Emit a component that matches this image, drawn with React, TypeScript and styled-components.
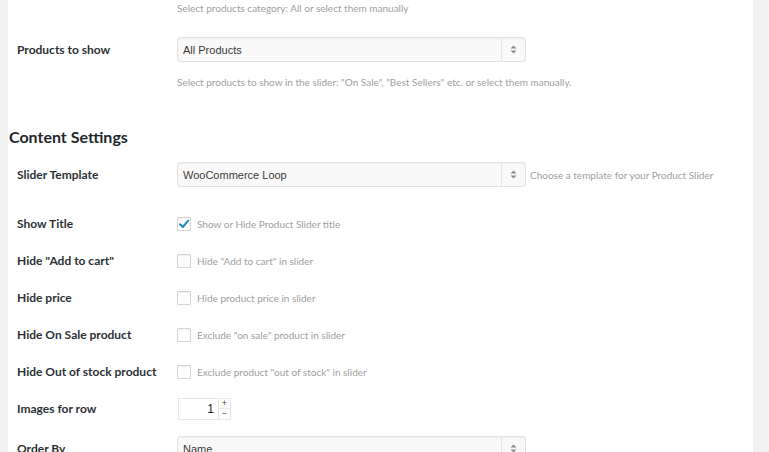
import React from "react";
import styled, { createGlobalStyle } from "styled-components";

const GlobalStyle = createGlobalStyle`
  html, body {
    margin: 0;
    padding: 0;
    background: #f1f1f1;
    overflow: hidden;
  }
`;

const Page = styled("div")`
  display: flex;
  height: 452px;
  padding-left: 8px;
`;

const Panel = styled("div")`
  width: 745px;
  background: #fff;
  display: flex;
  flex-direction: column;
`;

const FormTable = styled("div")`
  display: flex;
  flex-direction: column;
  padding-left: 9px;
`;

const Row = styled("div")<{ $h: number; $mt?: number }>`
  display: grid;
  grid-template-columns: 160px 1fr;
  align-items: center;
  height: ${(p) => p.$h}px;
  margin-top: ${(p) => p.$mt || 0}px;
`;

const Label = styled("div")`
  font-family: Lato, "Open Sans", sans-serif;
  font-weight: 700;
  font-size: 12px;
  color: #2c3136;
`;

const Field = styled("div")`
  display: flex;
  align-items: center;
  gap: 4px;
`;

const Desc = styled("div")<{ $mt?: number }>`
  font-family: Lato, "Open Sans", sans-serif;
  font-size: 10px;
  line-height: 14px;
  color: #a0a0a0;
  margin-top: ${(p) => p.$mt || 0}px;
`;

const SelectBox = styled("div")`
  width: 349px;
  height: 25px;
  box-sizing: border-box;
  border: 1px solid #e2e2e2;
  border-radius: 3px;
  background: #f9f9f9;
  box-shadow: inset 0 1px 2px rgba(0, 0, 0, 0.05);
  display: flex;
  align-items: stretch;
  font-family: "Liberation Sans", Arial, sans-serif;
  font-size: 11px;
  color: #3a3a3a;
`;

const SelectValue = styled("div")`
  flex: 1;
  display: flex;
  align-items: center;
  padding-left: 5px;
`;

const SelectArrow = styled("div")`
  width: 23px;
  border-left: 1px solid #e6e6e6;
  display: flex;
  align-items: center;
  justify-content: center;
`;

const Divider = styled("div")`
  height: 1px;
  background: #e5e5e5;
  margin: 22px 8px 0 8px;
`;

const Heading = styled("h2")`
  margin: 16px 0 0 1px;
  font-family: Lato, "Open Sans", sans-serif;
  font-weight: 700;
  font-size: 16px;
  line-height: 20px;
  color: #23282d;
`;

const CheckLabel = styled("label")`
  display: flex;
  align-items: center;
  gap: 6px;
`;

const Box = styled("span")`
  width: 14px;
  height: 14px;
  box-sizing: border-box;
  border: 1px solid #d4d4d4;
  border-radius: 1px;
  background: #fff;
  box-shadow: inset 0 1px 2px rgba(0, 0, 0, 0.06);
  display: flex;
  align-items: center;
  justify-content: center;
`;

const Spinner = styled("div")`
  display: flex;
  height: 22px;
  margin-left: 1px;
`;

const SpinInput = styled("div")`
  width: 40px;
  box-sizing: border-box;
  border: 1px solid #e8e8e8;
  border-right: none;
  display: flex;
  align-items: center;
  justify-content: flex-end;
  padding-right: 4px;
  font-family: "Liberation Sans", Arial, sans-serif;
  font-size: 12px;
  color: #222;
`;

const SpinButtons = styled("div")`
  width: 13px;
  display: flex;
  flex-direction: column;
  border: 1px solid #e8e8e8;
  box-sizing: border-box;
`;

const SpinBtn = styled("div")`
  flex: 1;
  display: flex;
  align-items: center;
  justify-content: center;
  font-family: "Liberation Sans", Arial, sans-serif;
  font-size: 9px;
  line-height: 1;
  color: #444;
  & + & {
    border-top: 1px solid #e8e8e8;
  }
`;

const Gutter = styled("div")`
  flex: 1;
  background: #f1f1f1;
`;

const Arrows = () => (
  <svg width="7" height="9" viewBox="0 0 7 9">
    <path d="M3.5 0.5 L6.5 3.5 H0.5 Z" fill="#8c8c8c" />
    <path d="M3.5 8.5 L6.5 5.5 H0.5 Z" fill="#8c8c8c" />
  </svg>
);

const Select = ({ value }: { value: string }) => (
  <SelectBox>
    <SelectValue>{value}</SelectValue>
    <SelectArrow>
      <Arrows />
    </SelectArrow>
  </SelectBox>
);

const Check = ({ checked, text }: { checked?: boolean; text: string }) => (
  <CheckLabel>
    <Box>
      {checked && (
        <svg width="12" height="12" viewBox="0 0 12 12">
          <path
            d="M2 6.2 L4.8 9 L10.2 2.6"
            fill="none"
            stroke="#1e8cbe"
            strokeWidth="2"
            strokeLinecap="round"
            strokeLinejoin="round"
          />
        </svg>
      )}
    </Box>
    <Desc>{text}</Desc>
  </CheckLabel>
);

const checks = [
  { label: "Show Title", text: "Show or Hide Product Slider title", checked: true },
  { label: 'Hide "Add to cart"', text: 'Hide "Add to cart" in slider' },
  { label: "Hide price", text: "Hide product price in slider" },
  { label: "Hide On Sale product", text: 'Exclude "on sale" product in slider' },
  { label: "Hide Out of stock product", text: 'Exclude product "out of stock" in slider' },
];

export default function App() {
  return (
    <>
      <GlobalStyle />
      <Page>
        <Panel>
          <FormTable>
            <Row $h={16}>
              <div />
              <Desc>Select products category: All or select them manually</Desc>
            </Row>
            <Row $h={25} $mt={21}>
              <Label>Products to show</Label>
              <Select value="All Products" />
            </Row>
            <Row $h={14} $mt={13}>
              <div />
              <Desc>
                Select products to show in the slider: "On Sale", "Best Sellers" etc. or select them manually.
              </Desc>
            </Row>
          </FormTable>
          <Divider />
          <Heading>Content Settings</Heading>
          <FormTable>
            <Row $h={25} $mt={15}>
              <Label>Slider Template</Label>
              <Field>
                <Select value="WooCommerce Loop" />
                <Desc>Choose a template for your Product Slider</Desc>
              </Field>
            </Row>
            <Row $h={37} $mt={18}>
              <Label>{checks[0].label}</Label>
              <Check checked text={checks[0].text} />
            </Row>
            {checks.slice(1).map((c) => (
              <Row $h={37} key={c.label}>
                <Label>{c.label}</Label>
                <Check text={c.text} />
              </Row>
            ))}
            <Row $h={37}>
              <Label>Images for row</Label>
              <Spinner>
                <SpinInput>1</SpinInput>
                <SpinButtons>
                  <SpinBtn>+</SpinBtn>
                  <SpinBtn>−</SpinBtn>
                </SpinButtons>
              </Spinner>
            </Row>
            <Row $h={37} $mt={3}>
              <Label>Order By</Label>
              <Select value="Name" />
            </Row>
          </FormTable>
        </Panel>
        <Gutter />
      </Page>
    </>
  );
}
